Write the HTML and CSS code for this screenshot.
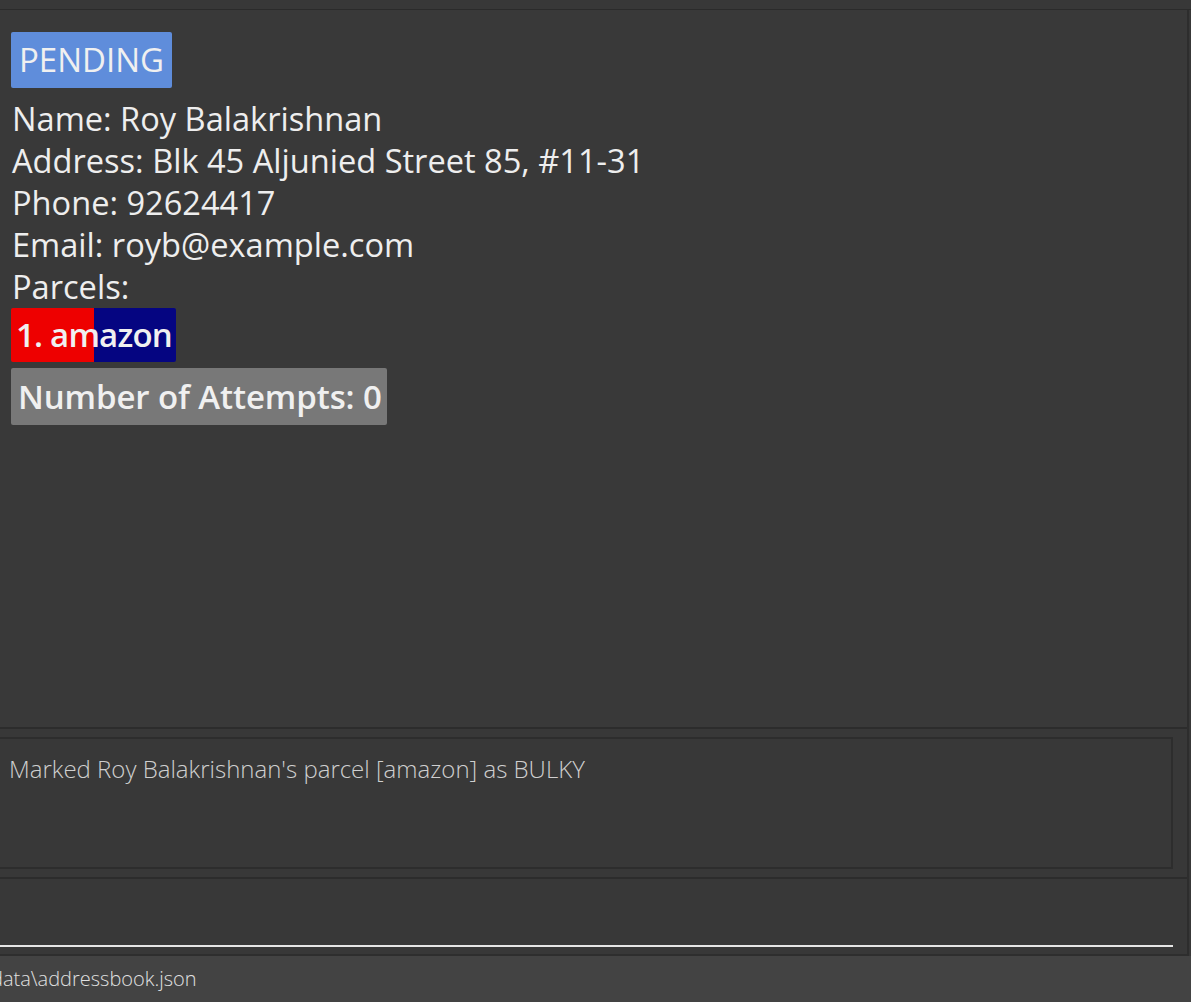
FILE: index.html
```html
<!DOCTYPE html>
<html>
<head>
<meta charset="utf-8">
<link rel="stylesheet" href="styles.css">
</head>
<body>
<div class="app">
  <div class="topstrip"></div>
  <div class="middle">
    <div class="stack">
      <section class="detail">
        <div class="badge pending">PENDING</div>
        <div class="field">Name: Roy Balakrishnan</div>
        <div class="field">Address: Blk 45 Aljunied Street 85, #11-31</div>
        <div class="field">Phone: 92624417</div>
        <div class="field">Email: royb@example.com</div>
        <div class="field">Parcels:</div>
        <div class="badge parcel">1. amazon</div>
        <div class="badge attempts">Number of Attempts: 0</div>
      </section>
      <section class="result">
        <div class="result-box">Marked Roy Balakrishnan's parcel [amazon] as BULKY</div>
      </section>
      <section class="command">
        <div class="command-input"></div>
      </section>
    </div>
    <div class="edge"></div>
  </div>
  <footer class="status">data\addressbook.json</footer>
</div>
</body>
</html>
```

FILE: styles.css
```css
html, body {
  margin: 0;
  padding: 0;
  background: #393939;
  font-family: "Open Sans", "Noto Sans", sans-serif;
  overflow: hidden;
}
.app {
  width: 1191px;
  height: 1002px;
  display: flex;
  flex-direction: column;
}
.topstrip {
  height: 9px;
  background: #383838;
  border-bottom: 1px solid #2b2b2b;
  box-shadow: 0 1px 1px #303030;
}
.middle {
  display: flex;
  flex: 1;
}
.stack {
  width: 1187px;
  display: flex;
  flex-direction: column;
  border-right: 2px solid #2d2d2d;
}
.edge {
  flex: 1;
  background: #383838;
}
.detail {
  height: 719px;
  background: #393939;
  padding: 22px 0 0 11px;
  box-sizing: border-box;
  display: flex;
  flex-direction: column;
  align-items: flex-start;
  color: #eeeeee;
  border-bottom: 2px solid #2c2c2c;
}
.field {
  font-size: 32.6px;
  line-height: 42px;
  padding-left: 1px;
}
.badge {
  color: #f0f0f0;
  font-weight: 600;
  border-radius: 2px;
  font-size: 33px;
}
.pending {
  background: #5f8ddb;
  font-weight: 500;
  height: 56px;
  line-height: 56px;
  padding: 0 8px;
  margin-bottom: 10px;
}
.parcel {
  background: linear-gradient(to right, #ee0000 50%, #050581 50%);
  height: 54px;
  line-height: 54px;
  padding: 0 4px 0 5px;
  letter-spacing: -0.8px;
}
.attempts {
  background: #787878;
  height: 57px;
  line-height: 57px;
  padding: 0 5px 0 7px;
  margin-top: 6px;
  letter-spacing: -0.1px;
}
.result {
  height: 150px;
  background: #383838;
  padding: 8px 14px 8px 0;
  box-sizing: border-box;
  border-bottom: 2px solid #2c2c2c;
}
.result-box {
  height: 132px;
  margin-left: -4px;
  border: 2px solid #2d2d2d;
  border-left: none;
  box-sizing: border-box;
  padding: 13px 0 0 13px;
  color: #cfcfcf;
  font-size: 24px;
  font-weight: 300;
}
.command {
  flex: 1;
  background: #383838;
  padding: 0 14px 0 0;
  display: flex;
  flex-direction: column;
  justify-content: flex-end;
  border-bottom: 2px solid #2e2e2e;
}
.command-input {
  height: 7px;
  border-top: 2px solid #e6e6e6;
}
.status {
  height: 46px;
  background: #434343;
  color: #e0e0e0;
  font-size: 20px;
  font-weight: 300;
  line-height: 46px;
  text-indent: -9px;
}
```
